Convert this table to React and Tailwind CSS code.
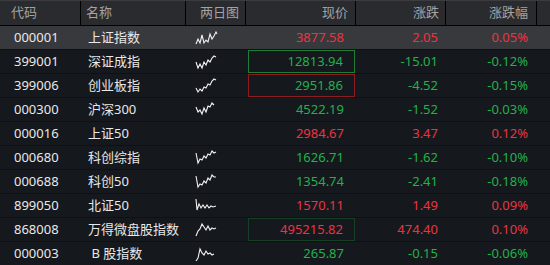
const rows = [
  { code: '000001', name: '上证指数', price: '3877.58', chg: '2.05', pct: '0.05%', up: true, selected: true, spark: '0,14 2,9 4,13 6,5 8,13 10,10 12,12 14,4 16,9 18,6 20,2 21,4' },
  { code: '399001', name: '深证成指', price: '12813.94', chg: '-15.01', pct: '-0.12%', box: 'green', spark: '0,8 2,14 4,10 6,14 8,8 10,11 12,6 14,8 16,4 18,2 20,3' },
  { code: '399006', name: '创业板指', price: '2951.86', chg: '-4.52', pct: '-0.15%', box: 'red', spark: '0,10 2,14 4,11 6,13 8,9 10,10 12,6 14,7 16,3 18,1 20,2' },
  { code: '000300', name: '沪深300', price: '4522.19', chg: '-1.52', pct: '-0.03%', spark: '0,5 2,10 4,8 6,12 8,6 10,10 12,4 14,5 16,1 18,3' },
  { code: '000016', name: '上证50', price: '2984.67', chg: '3.47', pct: '0.12%', up: true },
  { code: '000680', name: '科创综指', price: '1626.71', chg: '-1.62', pct: '-0.10%', spark: '0,3 2,13 4,9 6,10 8,6 10,8 12,4 14,5 16,1 18,3 20,2' },
  { code: '000688', name: '科创50', price: '1354.74', chg: '-2.41', pct: '-0.18%', spark: '0,2 2,13 4,10 6,11 8,7 10,9 12,4 14,6 16,1 18,3 20,3' },
  { code: '899050', name: '北证50', price: '1570.11', chg: '1.49', pct: '0.09%', up: true, spark: '0,1 1,12 3,6 5,10 7,7 9,10 11,7 13,10 15,8 17,9 20,8' },
  { code: '868008', name: '万得微盘股指数', price: '495215.82', chg: '474.40', pct: '0.10%', up: true, box: 'dark', spark: '0,14 2,9 4,7 6,2 8,5 10,8 12,4 14,8 16,6 18,7 20,6' },
  { code: '000003', name: ' B 股指数', price: '265.87', chg: '-0.15', pct: '-0.06%', spark: '0,15 2,12 4,3 6,7 8,9 10,5 12,8 14,7 16,9 18,8' },
]

const boxCls = {
  green: 'border border-[#1f7f38]',
  red: 'border border-[#8c1c1f]',
  dark: 'border border-[#173f26]',
}

function Spark({ pts }) {
  return (
    <svg width="24" height="18" viewBox="-1 -1 24 18" className="ml-[9px]">
      <polyline points={pts} fill="none" stroke="#f2f2f2" strokeWidth="1.1" strokeLinejoin="miter" />
    </svg>
  )
}

export default function App() {
  const grid = 'grid grid-cols-[81px_105px_60px_110px_90px_91px_13px]'
  return (
    <div className="w-[550px] h-[265px] overflow-hidden bg-[#15181d] text-[13px]" style={{ fontFamily: '"Noto Sans", "Noto Sans CJK SC", sans-serif' }}>
      <div className={`${grid} h-[26px] bg-[#2a2b2f] border-t border-[#3c3c40] border-b border-b-black text-[#a3a3a3]`}>
        <div className="border-r border-black pl-[11px] flex items-center">代码</div>
        <div className="border-r border-black pl-[5px] flex items-center">名称</div>
        <div className="border-r border-black pr-[6px] flex items-center justify-end">两日图</div>
        <div className="border-r border-black pr-[7px] flex items-center justify-end">现价</div>
        <div className="border-r border-black pr-[6px] flex items-center justify-end">涨跌</div>
        <div className="border-r border-black pr-[8px] flex items-center justify-end">涨跌幅</div>
        <div />
      </div>
      {rows.map((r) => {
        const color = r.up ? 'text-[#ec3440]' : 'text-[#22b24c]'
        return (
          <div key={r.code} className={`${grid} h-[24px] border-b border-[#0e1013] ${r.selected ? 'bg-[#38393d]' : ''}`}>
            <div className="pl-[14px] flex items-center text-[#e8e8e8]">{r.code}</div>
            <div className="pl-[7px] flex items-center text-[#e8e8e8] whitespace-pre">{r.name}</div>
            <div className="flex items-center">{r.spark && <Spark pts={r.spark} />}</div>
            <div className="pl-[2px] pr-[1px]">
              <div className={`h-full flex items-center justify-end pr-[11px] ${color} ${r.box ? boxCls[r.box] : ''}`}>{r.price}</div>
            </div>
            <div className={`pr-[8px] flex items-center justify-end ${color}`}>{r.chg}</div>
            <div className={`pr-[9px] flex items-center justify-end ${color}`}>{r.pct}</div>
            <div />
          </div>
        )
      })}
    </div>
  )
}
